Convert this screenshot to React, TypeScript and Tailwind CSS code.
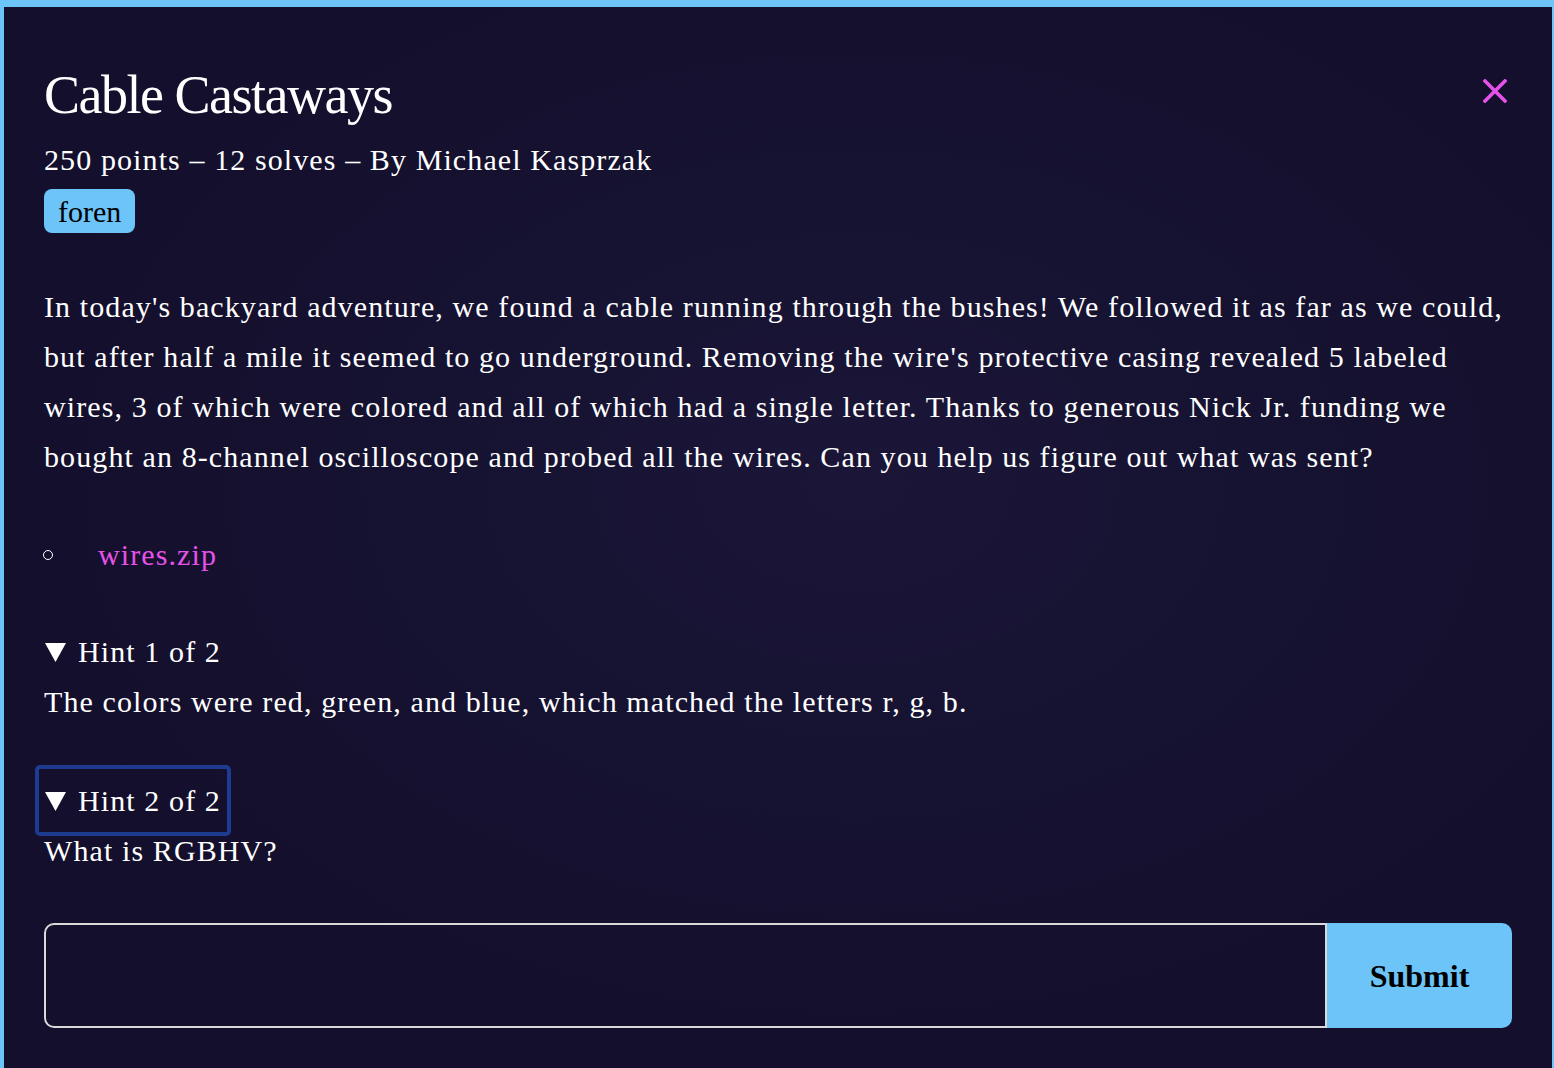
import React from "react";

function Tri() {
  return (
    <svg width="21" height="19" viewBox="0 0 21 19" className="mr-[12px] shrink-0">
      <path d="M0 0 H21 L10.5 19 Z" fill="#ffffff" />
    </svg>
  );
}

export default function App() {
  return (
    <div
      className="min-h-[1068px] w-full border-t-[7px] border-l-4 border-r-2 border-[#6cc4f8] bg-[#130f2c] text-white"
      style={{ fontFamily: '"Liberation Serif", "Times New Roman", serif', backgroundImage: "radial-gradient(ellipse at 55% 45%, #1b1638 0%, #161231 35%, #130f2c 70%)" }}
    >
      <div className="px-10 pt-[55px] tracking-[1.1px]">
        <div className="flex items-start justify-between">
          <div>
            <h1 className="text-[54px] leading-[66px] tracking-[-1.5px]">Cable Castaways</h1>
            <div className="mt-[14px] text-[30px] leading-[36px]">250 points – 12 solves – By Michael Kasprzak</div>
            <div className="mt-[11px] inline-flex h-[44px] items-center rounded-[8px] bg-[#6cc4f8] px-[14px] text-[30px] tracking-normal text-black">foren</div>
          </div>
          <button className="mr-[5px] mt-[17px]" aria-label="close">
            <svg width="24" height="24" viewBox="0 0 24 24">
              <path d="M2 2 L22 22 M22 2 L2 22" stroke="#e651ea" strokeWidth="3.6" strokeLinecap="square" />
            </svg>
          </button>
        </div>
        <p className="mt-[49px] text-[30px] leading-[50px]">
          In today's backyard adventure, we found a cable running through the bushes! We followed it as far as we could, but after half a mile it seemed to go underground. Removing the wire's protective casing revealed 5 labeled wires, 3 of which were colored and all of which had a single letter. Thanks to generous Nick Jr. funding we bought an 8-channel oscilloscope and probed all the wires. Can you help us figure out what was sent?
        </p>
        <ul className="mt-[48px] text-[30px] leading-[50px]">
          <li className="flex items-center">
            <span className="ml-[-1px] mr-[45px] h-[10px] w-[10px] rounded-full border-[1.5px] border-white" />
            <span className="text-[#e651ea]">wires.zip</span>
          </li>
        </ul>
        <div className="mt-[47px] text-[30px] leading-[50px]">
          <div className="flex items-center pl-[1px]">
            <Tri />
            <span>Hint 1 of 2</span>
          </div>
          <div>The colors were red, green, and blue, which matched the letters r, g, b.</div>
        </div>
        <div className="mt-[38px] text-[30px] leading-[50px]">
          <div className="ml-[-9px] inline-flex items-center rounded-[5px] border-[4px] border-[#1d3b8f] pb-[6px] pl-[6px] pr-[6px] pt-[7px]">
            <Tri />
            <span>Hint 2 of 2</span>
          </div>
          <div className="-mt-[10px]">What is RGBHV?</div>
        </div>
        <form className="mt-[47px] flex h-[105px]">
          <input className="h-full flex-1 rounded-l-[10px] border-2 border-[#d9d9d9] bg-transparent px-4 text-[30px] text-white outline-none" />
          <button type="button" className="h-full w-[185px] rounded-r-[10px] bg-[#6cc4f8] text-[32px] font-bold tracking-normal text-black">Submit</button>
        </form>
      </div>
    </div>
  );
}
